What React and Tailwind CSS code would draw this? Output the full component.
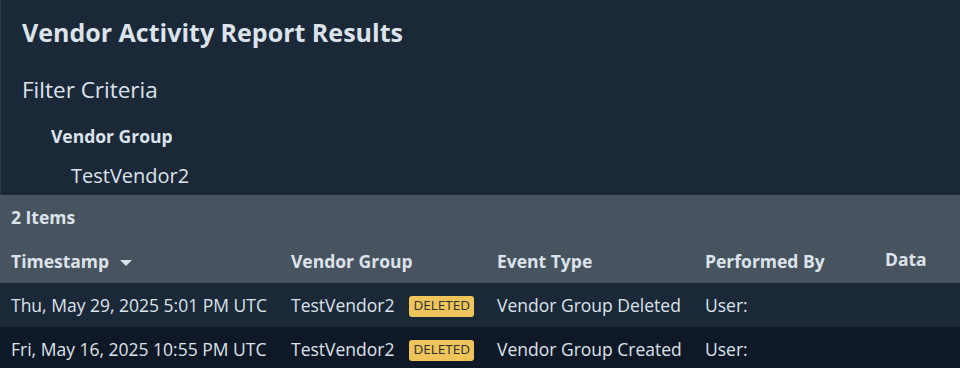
import React from "react";

const rows = [
  {
    timestamp: "Thu, May 29, 2025 5:01 PM UTC",
    vendorGroup: "TestVendor2",
    eventType: "Vendor Group Deleted",
    performedBy: "User:",
  },
  {
    timestamp: "Fri, May 16, 2025 10:55 PM UTC",
    vendorGroup: "TestVendor2",
    eventType: "Vendor Group Created",
    performedBy: "User:",
  },
];

function DeletedBadge() {
  return (
    <span className="ml-[15px] mt-[2px] inline-flex h-[21px] items-center rounded-[3px] bg-[#efc55b] px-[4px] text-[13.5px] leading-none text-[#2b2f36]">
      DELETED
    </span>
  );
}

export default function App() {
  return (
    <div
      className="h-[368px] w-[960px] overflow-hidden bg-[#1b2838] text-[#dde3ea]"
      style={{ fontFamily: '"Open Sans", "Noto Sans", sans-serif' }}
    >
      {/* Filter summary */}
      <div className="h-[195px] border-l border-[#2d3948] pl-[21px]">
        <h1 className="pt-[15px] text-[25px] font-bold leading-[34px]">Vendor Activity Report Results</h1>
        <h2 className="mt-[26px] text-[22.5px] leading-[30px]">Filter Criteria</h2>
        <div className="pl-[29px]">
          <div className="mt-[19px] text-[17.5px] font-bold leading-[24px]">Vendor Group</div>
          <div className="mt-[15px] pl-[20px] text-[20px] leading-[26px]">TestVendor2</div>
        </div>
      </div>

      {/* Results table */}
      <div className="bg-[#47535f]">
        <div className="flex h-[45px] items-center px-[11px] text-[17.5px] font-bold">2 Items</div>
        <div className="grid h-[43px] grid-cols-[280px_206px_208px_180px_1fr] items-center px-[11px] text-[17.5px] font-bold">
          <div className="flex items-center">
            Timestamp
            <svg width="12" height="6" viewBox="0 0 12 6" className="ml-[11px] mt-[3px]">
              <path d="M0 0 L12 0 L6 6 Z" fill="#dde3ea" />
            </svg>
          </div>
          <div>Vendor Group</div>
          <div>Event Type</div>
          <div>Performed By</div>
          <div className="mb-[4px]">Data</div>
        </div>
      </div>
      {rows.map((r, i) => (
        <div
          key={i}
          className={`grid h-[44px] grid-cols-[280px_206px_208px_180px_1fr] items-center px-[11px] text-[17.5px] ${
            i % 2 === 0 ? "bg-[#1b2838]" : "bg-[#0f1826]"
          }`}
        >
          <div className="whitespace-nowrap">{r.timestamp}</div>
          <div className="flex items-center whitespace-nowrap">
            {r.vendorGroup}
            <DeletedBadge />
          </div>
          <div className="whitespace-nowrap">{r.eventType}</div>
          <div>{r.performedBy}</div>
          <div></div>
        </div>
      ))}
    </div>
  );
}
